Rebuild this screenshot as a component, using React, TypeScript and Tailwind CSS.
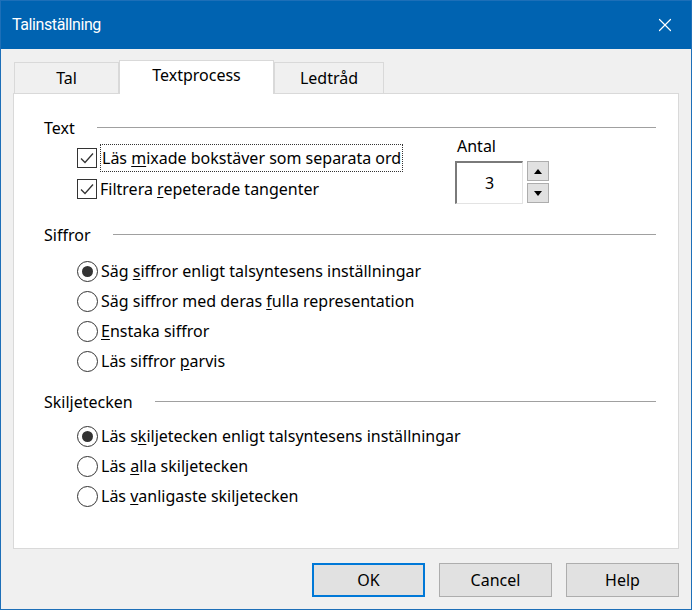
import { X } from "lucide-react";

const font = { fontFamily: '"Noto Sans", "Open Sans", sans-serif' };

const Mn = ({ children }: { children: string }) => <span className="underline underline-offset-2">{children}</span>;

const Check = () => (
  <div className="w-[20px] h-[20px] border border-[#333] bg-white flex items-center justify-center shrink-0">
    <svg width="16" height="16" viewBox="0 0 16 16">
      <path d="M2 8.5 L6 12.5 L14 3.5" fill="none" stroke="#333" strokeWidth="1.3" />
    </svg>
  </div>
);

const Radio = ({ on }: { on?: boolean }) => (
  <div className="w-[21px] h-[21px] rounded-full border border-[#333] bg-white flex items-center justify-center shrink-0">
    {on && <div className="w-[11px] h-[11px] rounded-full bg-[#333]" />}
  </div>
);

const Header = ({ label, className }: { label: string; className?: string }) => (
  <div className={"flex items-center h-[20px] " + (className ?? "")}>
    <span className="pr-[22px]">{label}</span>
    <div className="flex-1 h-[2px] border-t border-[#a0a0a0] border-b border-b-white" />
  </div>
);

const Row = ({ children, on, radio, h = "h-[30px]" }: { children: React.ReactNode; on?: boolean; radio?: boolean; h?: string }) => (
  <div className={"flex items-center pl-[33px] gap-[3px] " + h}>
    {radio ? <Radio on={on} /> : <Check />}
    <span>{children}</span>
  </div>
);

const Btn = ({ children, def }: { children: string; def?: boolean }) => (
  <button
    className={
      "w-[113px] h-[34px] bg-[#e1e1e1] flex items-center justify-center " +
      (def ? "border-2 border-[#0078d7]" : "border border-[#adadad]")
    }
  >
    {children}
  </button>
);

export default function App() {
  return (
    <div style={font} className="w-[692px] h-[610px] bg-[#f0f0f0] border border-[#1d6fb8] flex flex-col text-[16px] text-black">
      <div className="h-[48px] bg-[#0063b1] flex items-center justify-between pl-[11px] pr-[15px] text-white">
        <span className="text-[16px] tracking-[-0.4px]" style={{ fontFamily: 'Roboto, "Noto Sans", sans-serif' }}>
          Talinställning
        </span>
        <X size={22} strokeWidth={1.3} />
      </div>

      <div className="flex-1 flex flex-col px-[12px] pt-[10px]">
        <div className="flex items-end h-[34px] pl-[1px]">
          <div className="w-[105px] h-[31px] border border-[#d9d9d9] border-b-0 bg-[#f0f0f0] flex items-center justify-center">Tal</div>
          <div className="w-[155px] h-[34px] border border-[#d9d9d9] border-b-0 bg-white flex items-start justify-center pt-[2px] -mb-px relative z-10">Textprocess</div>
          <div className="w-[110px] h-[31px] border border-[#d9d9d9] border-b-0 bg-[#f0f0f0] flex items-center justify-center">Ledtråd</div>
        </div>

        <div className="h-[456px] bg-white border border-[#d9d9d9] pl-[30px] pr-[22px] pt-[24px]">
          <Header label="Text" />
          <div className="flex items-start">
            <div className="w-[411px] pt-[5px]">
              <div className="flex items-center h-[30px] pl-[33px] gap-[3px]">
                <Check />
                <span className="border border-dotted border-[#333] px-[1px] leading-[26px]">
                  Läs <Mn>m</Mn>ixade bokstäver som separata ord
                </span>
              </div>
              <Row h="h-[32px]">
                Filtrera <Mn>r</Mn>epeterade tangenter
              </Row>
            </div>
            <div className="flex flex-col -mt-[2px]">
              <span className="pl-[2px] leading-[20px]">Antal</span>
              <div className="flex gap-[4px] mt-[5px]">
                <div className="w-[68px] h-[43px] border-t-2 border-l-2 border-[#7a7a7a] border-r border-b border-r-[#e3e3e3] border-b-[#e3e3e3] flex items-center justify-center">3</div>
                <div className="flex flex-col gap-[2px]">
                  <div className="w-[22px] h-[20px] bg-[#e1e1e1] border border-[#adadad] flex items-center justify-center">
                    <svg width="8" height="5" viewBox="0 0 8 5"><path d="M0 5 L4 0 L8 5Z" fill="#000" /></svg>
                  </div>
                  <div className="w-[22px] h-[20px] bg-[#e1e1e1] border border-[#adadad] flex items-center justify-center">
                    <svg width="8" height="5" viewBox="0 0 8 5"><path d="M0 0 L4 5 L8 0Z" fill="#000" /></svg>
                  </div>
                </div>
              </div>
            </div>
          </div>

          <Header label="Siffror" className="mt-[20px]" />
          <div className="mt-[11px]">
            <Row radio on>
              Säg <Mn>s</Mn>iffror enligt talsyntesens inställningar
            </Row>
            <Row radio>
              Säg siffror med deras <Mn>f</Mn>ulla representation
            </Row>
            <Row radio>
              <Mn>E</Mn>nstaka siffror
            </Row>
            <Row radio>
              Läs siffror <Mn>p</Mn>arvis
            </Row>
          </div>

          <Header label="Skiljetecken" className="mt-[16px]" />
          <div className="mt-[9px]">
            <Row radio on>
              Läs s<Mn>k</Mn>iljetecken enligt talsyntesens inställningar
            </Row>
            <Row radio>
              Läs <Mn>a</Mn>lla skiljetecken
            </Row>
            <Row radio>
              Läs <Mn>v</Mn>anligaste skiljetecken
            </Row>
          </div>
        </div>

        <div className="flex justify-end gap-[14px] mt-[14px]">
          <Btn def>OK</Btn>
          <Btn>Cancel</Btn>
          <Btn>Help</Btn>
        </div>
      </div>
    </div>
  );
}
